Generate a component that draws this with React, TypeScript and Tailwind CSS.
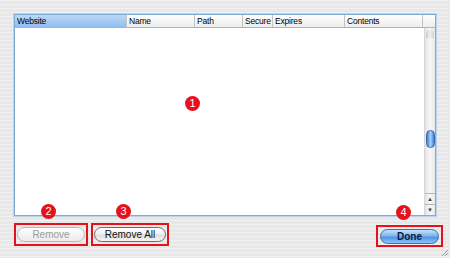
import React from 'react'

const columns = [
  { label: 'Website', w: 'w-[112px]', active: true },
  { label: 'Name', w: 'w-[68px]' },
  { label: 'Path', w: 'w-[48px]' },
  { label: 'Secure', w: 'w-[30px]' },
  { label: 'Expires', w: 'w-[72px]' },
  { label: 'Contents', w: 'w-[78px]' },
]

function Badge({ n, className }: { n: number; className: string }) {
  return (
    <div
      className={`absolute w-[15px] h-[15px] rounded-full bg-[#e5121c] text-white text-[11px] leading-none flex items-center justify-center ${className}`}
    >
      {n}
    </div>
  )
}

function Pill({ label, tone, className }: { label: string; tone: 'off' | 'plain' | 'blue'; className: string }) {
  const look =
    tone === 'blue'
      ? 'bg-[linear-gradient(to_bottom,#c4e0fb_0%,#7fb6f0_45%,#4d94e4_55%,#8cc4f6_100%)] border-[#3f6fa8] text-[#0c1a3a]'
      : tone === 'plain'
        ? 'bg-[linear-gradient(to_bottom,#ffffff_0%,#f1f1f1_45%,#dedede_55%,#f4f4f4_100%)] border-[#6d6d6d] text-[#111]'
        : 'bg-[linear-gradient(to_bottom,#ffffff_0%,#f3f3f3_50%,#ececec_100%)] border-[#b9b9b9] text-[#9b9b9b]'
  return (
    <div className={`h-[15px] rounded-full border flex items-center justify-center text-[10px] ${look} ${className}`}>
      {label}
    </div>
  )
}

export default function App() {
  return (
    <div className="w-[450px] h-[258px] relative flex flex-col bg-[#e8e8e8] bg-[repeating-linear-gradient(to_bottom,#f1f1f1_0px,#f1f1f1_1px,#e8e8e8_1px,#e8e8e8_4px)] font-['Liberation_Sans',sans-serif]">
      {/* table */}
      <div className="mx-[14px] mt-[14px] h-[202px] border border-[#7eaadf] shadow-[0_0_0_1px_#b9d3f1] bg-white flex flex-col">
        <div className="h-[13px] flex border-b border-[#b3b3b3] bg-[linear-gradient(to_bottom,#ffffff,#ededed)]">
          {columns.map(c => (
            <div
              key={c.label}
              className={`${c.w} shrink-0 overflow-hidden whitespace-nowrap border-r border-[#c3c3c3] pl-[2px] text-[8.5px] leading-[12px] tracking-[-0.2px] text-black ${
                c.active ? 'bg-[linear-gradient(to_bottom,#bcd9f8,#8fbdee)]' : ''
              }`}
            >
              {c.label}
            </div>
          ))}
          <div className="flex-1" />
        </div>
        <div className="flex-1 flex">
          <div className="flex-1 relative">
            <Badge n={1} className="left-[170px] top-[68px]" />
          </div>
          {/* scrollbar */}
          <div className="w-[11px] flex flex-col border-l border-[#d6d6d6] bg-[linear-gradient(to_right,#e2e2e2,#f7f7f7_45%,#eaeaea)]">
            <div className="flex-1 relative">
              <div className="absolute left-[1px] right-[1px] top-[2px] h-[8px] rounded-t-full bg-[linear-gradient(to_right,#c9c9c9,#f0f0f0,#cfcfcf)]" />
              <div className="absolute left-[1px] right-[0px] top-[102px] h-[18px] rounded-full border border-[#3567a8] bg-[linear-gradient(to_right,#3b7fd8,#a9d0fa_50%,#3b7fd8)]" />
            </div>
            <div className="h-[11px] border-t border-[#b5b5b5] flex items-center justify-center text-[6px] text-[#444]">▲</div>
            <div className="h-[11px] border-t border-[#b5b5b5] flex items-center justify-center text-[6px] text-[#444]">▼</div>
          </div>
        </div>
      </div>

      {/* buttons */}
      <div className="flex items-start mt-[7px] pl-[14px] pr-[7px]">
        <div className="relative w-[74px] h-[23px] border-2 border-[#e5121c] flex items-center px-[1px]">
          <Badge n={2} className="left-[25px] -top-[21px]" />
          <Pill label="Remove" tone="off" className="w-full" />
        </div>
        <div className="relative ml-[3px] w-[78px] h-[23px] border-2 border-[#e5121c] flex items-center px-[1px]">
          <Badge n={3} className="left-[23px] -top-[21px]" />
          <Pill label="Remove All" tone="plain" className="w-full" />
        </div>
        <div className="relative ml-auto mt-[2px] w-[67px] h-[22px] border-2 border-[#e5121c] flex items-center px-[2px]">
          <Badge n={4} className="left-[18px] -top-[22px]" />
          <Pill label="Done" tone="blue" className="w-full font-bold" />
        </div>
      </div>

      {/* resize grip */}
      <svg className="absolute right-[1px] bottom-[1px]" width="8" height="8" viewBox="0 0 8 8">
        <path d="M7 1 L1 7 M7 4 L4 7" stroke="#9a9a9a" strokeWidth="1" />
      </svg>
    </div>
  )
}
